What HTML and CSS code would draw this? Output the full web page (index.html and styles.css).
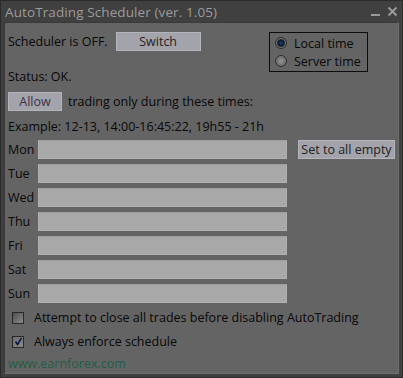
FILE: index.html
```html
<!DOCTYPE html>
<html>
<head>
<meta charset="utf-8">
<link rel="stylesheet" href="styles.css">
</head>
<body>
<div class="window">
  <div class="titlebar">
    <span class="title">AutoTrading Scheduler (ver. 1.05)</span>
    <span class="controls">
      <svg width="11" height="11" viewBox="0 0 11 11"><rect x="1" y="8" width="9" height="2" fill="#9a9a9a"/></svg>
      <svg width="11" height="11" viewBox="0 0 11 11"><path d="M1.5 1.5 L9.5 9.5 M9.5 1.5 L1.5 9.5" stroke="#9a9a9a" stroke-width="2"/></svg>
    </span>
  </div>
  <div class="panel">
    <div class="top">
      <div class="topleft">
        <div class="row">
          <span class="lbl">Scheduler is OFF.</span>
          <span class="btn btn-switch">Switch</span>
        </div>
        <div class="line status">Status: OK.</div>
      </div>
      <div class="group">
        <div class="radio-row"><span class="radio on"></span><span>Local time</span></div>
        <div class="radio-row"><span class="radio"></span><span>Server time</span></div>
      </div>
    </div>
    <div class="row allow-row">
      <span class="btn btn-allow">Allow</span>
      <span class="lbl">trading only during these times:</span>
    </div>
    <div class="line example">Example: 12-13, 14:00-16:45:22, 19h55 - 21h</div>
    <div class="days">
      <span class="day">Mon</span><span class="field"></span><span class="btn btn-set">Set to all empty</span>
      <span class="day">Tue</span><span class="field"></span><span></span>
      <span class="day">Wed</span><span class="field"></span><span></span>
      <span class="day">Thu</span><span class="field"></span><span></span>
      <span class="day">Fri</span><span class="field"></span><span></span>
      <span class="day">Sat</span><span class="field"></span><span></span>
      <span class="day">Sun</span><span class="field"></span><span></span>
    </div>
    <div class="check-row first"><span class="check"></span><span>Attempt to close all trades before disabling AutoTrading</span></div>
    <div class="check-row"><span class="check on"><svg width="9" height="9" viewBox="0 0 9 9"><path d="M1.5 4.5 L3.5 7.5 L7.5 1" stroke="#0c1a4a" stroke-width="1.6" fill="none"/></svg></span><span>Always enforce schedule</span></div>
    <div class="footer">www.earnforex.com</div>
  </div>
</div>
</body>
</html>
```

FILE: styles.css
```css
* { box-sizing: border-box; }
html, body { margin: 0; padding: 0; background: #2b2b2b; }
body { font-family: "Open Sans", "DejaVu Sans", sans-serif; font-size: 12.5px; color: #080808; }

.window {
  width: 403px; height: 378px;
  background: #404040;
  border: 1px solid #2b2b2b;
  display: flex; flex-direction: column;
}
.titlebar {
  height: 22px;
  display: flex; align-items: center; justify-content: space-between;
  padding: 0 4px 0 4px;
  color: #9b9b9b;
  font-size: 13.5px;
}
.title { letter-spacing: 0.1px; }
.controls { display: flex; gap: 6px; align-items: center; }

.panel {
  margin: 0 3px 3px 3px;
  flex: 1;
  background: #646464;
  border: 1px solid #3a3a3a;
  border-right-color: #6e6e6e;
  border-bottom-color: #6e6e6e;
  padding: 9px 3px 0 3px;
}

.top { display: flex; }
.topleft { flex: 1; }
.row { display: flex; align-items: center; height: 19px; }
.line { height: 19px; line-height: 20px; }
.status { margin-top: 16px; }

.btn {
  display: inline-flex; align-items: center; justify-content: center;
  height: 19px;
  background: #a3a3ab;
  border: 1px solid #b4b4bc;
  color: #222;
}
.btn-switch { width: 85px; margin-left: 8px; }
.btn-allow { width: 54px; margin-right: 6px; color: #3b2f48; }
.btn-set { width: 97px; margin-left: 11px; }

.group {
  width: 99px; height: 40px;
  border: 1px solid #0c0c0c;
  margin-right: 27px;
  padding: 1px 0 0 5px;
}
.radio-row { display: flex; align-items: center; height: 18px; gap: 7px; }
.radio {
  width: 12px; height: 12px; border-radius: 50%;
  background: radial-gradient(circle, #8a8a8a 25%, #5a5a5a 75%);
  border: 1px solid #2e2e2e;
  box-shadow: inset 0 0 0 1px #7e7e7e;
}
.radio.on { background: radial-gradient(circle, #1a4a80 0%, #0b2142 32%, #1b1b1b 45%, #5c5c5c 75%); }

.allow-row { margin-top: 6px; }
.example { margin-top: 6px; }

.days {
  margin-top: 4px;
  display: grid;
  grid-template-columns: 30px 249px auto;
  grid-auto-rows: 19px;
  row-gap: 5px;
  align-items: center;
}
.day { line-height: 20px; }
.field {
  height: 19px;
  background: #a8a8a8;
  border: 1px solid #b0b0b0;
  border-top-color: #9c9c9c;
}
.btn-set { justify-self: start; }

.check-row { display: flex; align-items: center; height: 19px; gap: 10px; padding-left: 4px; }
.check-row.first { margin-top: 5px; }
.check-row + .check-row { margin-top: 5px; }
.check {
  width: 12px; height: 12px;
  border: 1px solid #2a2a2a;
  background: linear-gradient(135deg, #4e4e4e, #8a8a8a);
  display: inline-flex; align-items: center; justify-content: center;
}
.check.on { background: linear-gradient(135deg, #6e6e6e, #8a8a8a); }

.footer { margin-top: 3px; height: 19px; line-height: 20px; color: #1f5e45; }
```
